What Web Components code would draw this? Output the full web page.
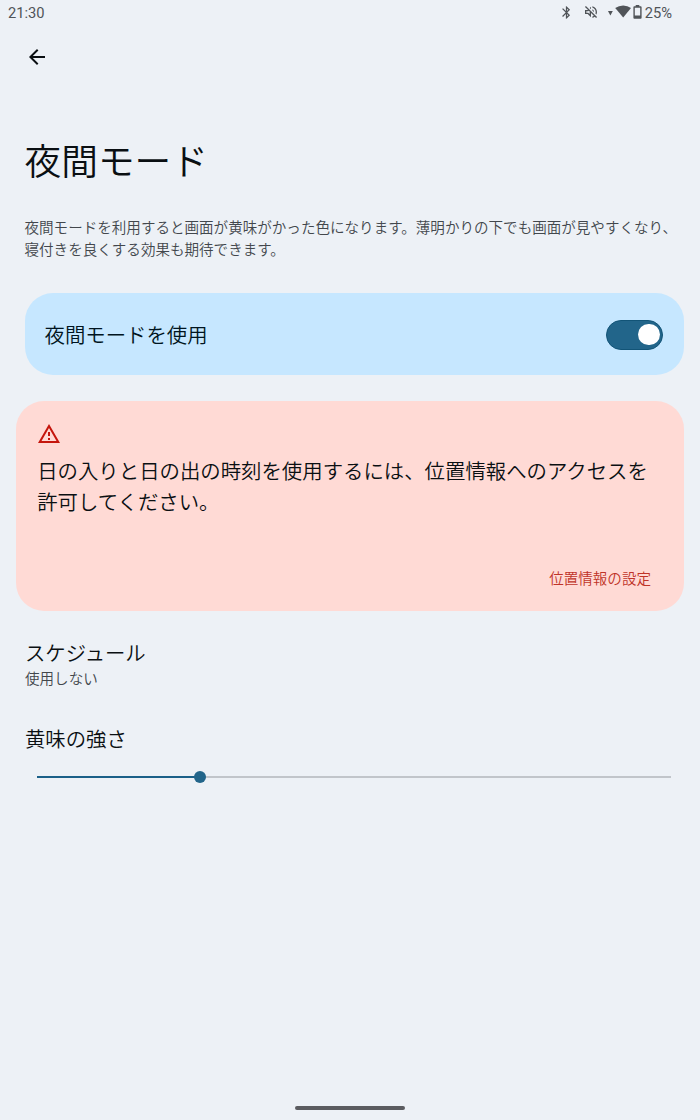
<!DOCTYPE html>
<html lang="ja">
<head>
<meta charset="utf-8">
<title>夜間モード</title>
<style>
    body {
        margin: 0;
        background: #edf1f6;
        color: #0a0f12;
        font-family: "Noto Sans CJK JP", sans-serif;
        font-weight: 350;
    }
</style>
</head>
<body>
<night-mode-screen></night-mode-screen>

<script>
class StatusBar extends HTMLElement {

    constructor() {
        super()
        this.shadowDOM = this.attachShadow({mode: "open"})
    }

    connectedCallback() {
        this.shadowDOM.innerHTML = `
            <style>
                :host {
                    display: flex;
                    align-items: center;
                    height: 26px;
                    padding: 0 28px 0 8px;
                    box-sizing: border-box;
                    font: 400 14.7px/25px Roboto, sans-serif;
                    color: #505458;
                }

                .time {
                    margin-right: auto;
                }

                svg {
                    display: block;
                    fill: #505458;
                    margin-top: -2px;
                }

                span {
                    padding-top: 1px;
                }

                .bluetooth { margin-right: 9px; }
                .muted { margin-right: 9px; }
                .wifi { margin-right: 2px; }
                .battery { margin-right: 3px; }
            </style>
            <span class="time">${this.getAttribute("time")}</span>
            <svg class="bluetooth" width="15" height="15" viewBox="0 0 24 24"><path d="M17.71 7.71 12 2h-1v7.59L6.41 5 5 6.41 10.59 12 5 17.59 6.41 19 11 14.41V22h1l5.71-5.71-4.3-4.29 4.3-4.29zM13 5.83l1.88 1.88L13 9.59V5.83zm1.88 10.46L13 18.17v-3.76l1.88 1.88z"/></svg>
            <svg class="muted" width="16" height="16" viewBox="0 0 24 24"><path d="M4.34 2.93 2.93 4.34 7.29 8.7 7 9H3v6h4l5 5v-6.59l4.18 4.18c-.65.49-1.38.88-2.18 1.11v2.06a8.94 8.94 0 0 0 3.61-1.75l2.05 2.05 1.41-1.41L4.34 2.93zM10 15.17 7.83 13H5v-2h2.83l.88-.88L10 11.41v3.76zM19 12c0 .82-.15 1.61-.41 2.34l1.53 1.53c.56-1.17.88-2.48.88-3.87 0-4.28-2.99-7.86-7-8.77v2.06c2.89.86 5 3.54 5 6.71zm-7-8-1.88 1.88L12 7.76V4zm4.5 8A4.5 4.5 0 0 0 14 7.97v1.79l2.48 2.48c.01-.08.02-.16.02-.24z"/></svg>
            <svg class="wifi" width="23" height="14" viewBox="0 0 23 14"><path d="M0 6h4.8L2.4 10.5z"/><path d="M15.2 12.6 7.2 3Q10.8.4 15.2.4T23 3z"/></svg>
            <svg class="battery" width="9" height="14" viewBox="0 0 9 14"><path fill-rule="evenodd" d="M2.7 0h3.6v1.3h1.4q.9 0 .9.9v10.6q0 .9-.9.9H1.3q-.9 0-.9-.9V2.2q0-.9.9-.9h1.4zM1.8 2.7v7.7h5.4V2.7z"/></svg>
            <span>${this.getAttribute("battery")}</span>
        `;
    }

}

class MainSwitch extends HTMLElement {

    constructor() {
        super()
        this.shadowDOM = this.attachShadow({mode: "open"})
    }

    connectedCallback() {
        this.shadowDOM.innerHTML = `
            <style>
                :host {
                    display: flex;
                    align-items: center;
                    justify-content: space-between;
                    height: 82px;
                    padding: 0 20.5px 0 20px;
                    box-sizing: border-box;
                    border-radius: 28px;
                    background: #c6e7ff;
                    font-size: 20.4px;
                    color: #001420;
                }

                .track {
                    display: flex;
                    justify-content: flex-end;
                    align-items: center;
                    width: 57.5px;
                    height: 30px;
                    margin-top: 1px;
                    padding-right: 2.5px;
                    box-sizing: border-box;
                    border-radius: 15px;
                    border: 1px solid #125477;
                    background: #22658a;
                }

                .thumb {
                    width: 21.5px;
                    height: 21.5px;
                    border-radius: 50%;
                    background: #fff;
                }
            </style>
            <slot></slot>
            <div class="track"><div class="thumb"></div></div>
        `;
    }

}

class WarningCard extends HTMLElement {

    constructor() {
        super()
        this.shadowDOM = this.attachShadow({mode: "open"})
    }

    connectedCallback() {
        this.shadowDOM.innerHTML = `
            <style>
                :host {
                    display: flex;
                    flex-direction: column;
                    height: 210.5px;
                    padding: 21.5px 32.5px 21px 20.8px;
                    box-sizing: border-box;
                    border-radius: 28px;
                    background: #ffdad5;
                }

                svg {
                    display: block;
                    fill: #c5160d;
                }

                .message {
                    margin-top: 9px;
                    font-size: 20.4px;
                    line-height: 30.5px;
                    white-space: nowrap;
                }

                .action {
                    margin-top: auto;
                    align-self: flex-end;
                    font-size: 14.55px;
                    line-height: 24px;
                    color: #c03328;
                }
            </style>
            <svg width="24" height="24" viewBox="0 0 24 24"><path d="M12 5.99 19.53 19H4.47L12 5.99M12 2 1 21h22L12 2zm1 14h-2v2h2v-2zm0-6h-2v4h2v-4z"/></svg>
            <div class="message"><slot></slot></div>
            <div class="action"><slot name="action"></slot></div>
        `;
    }

}

class PreferenceItem extends HTMLElement {

    constructor() {
        super()
        this.shadowDOM = this.attachShadow({mode: "open"})
    }

    connectedCallback() {
        this.shadowDOM.innerHTML = `
            <style>
                :host {
                    display: block;
                }

                .title {
                    font-size: 20.36px;
                    line-height: 30px;
                }

                .summary {
                    font-size: 14.55px;
                    line-height: 22px;
                    min-height: 22px;
                    color: #42474c;
                }
            </style>
            <div class="title">${this.getAttribute("label")}</div>
            <div class="summary"><slot></slot></div>
        `;
    }

}

class IntensitySlider extends HTMLElement {

    constructor() {
        super()
        this.shadowDOM = this.attachShadow({mode: "open"})
    }

    connectedCallback() {
        this.shadowDOM.innerHTML = `
            <style>
                :host {
                    display: flex;
                    align-items: center;
                    height: 12px;
                }

                .active {
                    width: ${this.getAttribute("value")}%;
                    height: 2px;
                    background: #1b6088;
                }

                .thumb {
                    flex: none;
                    width: 12.5px;
                    height: 12.5px;
                    margin: 0 -6.25px;
                    border-radius: 50%;
                    background: #22658a;
                    z-index: 1;
                }

                .rest {
                    flex: 1;
                    height: 2px;
                    background: #c1c5ca;
                }
            </style>
            <div class="active"></div>
            <div class="thumb"></div>
            <div class="rest"></div>
        `;
    }

}

class NightModeScreen extends HTMLElement {

    constructor() {
        super()
        this.shadowDOM = this.attachShadow({mode: "open"})
    }

    connectedCallback() {
        this.shadowDOM.innerHTML = `
            <style>
                :host {
                    display: flex;
                    flex-direction: column;
                    height: 1120px;
                    overflow: hidden;
                }

                .back {
                    display: block;
                    margin: 19px 0 0 25px;
                    fill: #0a0f12;
                }

                h1 {
                    margin: 63px 0 0 24.5px;
                    font-size: 36.7px;
                    line-height: 54px;
                    font-weight: inherit;
                }

                .description {
                    margin: 30px 0 0 24.5px;
                    font-size: 14.56px;
                    line-height: 22px;
                    white-space: nowrap;
                    color: #42474c;
                }

                main-switch {
                    margin: 33px 16.5px 0 24.5px;
                }

                warning-card {
                    margin: 25.5px 16.5px 0 16.4px;
                }

                .schedule {
                    margin: 26px 0 0 25px;
                }

                .intensity {
                    margin: 33.5px 0 0 25px;
                }

                intensity-slider {
                    margin: -3.5px 29px 0 37px;
                }

                .handle {
                    width: 110px;
                    height: 4px;
                    margin: auto auto 10px;
                    border-radius: 2px;
                    background: #5b5c60;
                }
            </style>

            <status-bar time="21:30" battery="25%"></status-bar>
            <svg class="back" width="24" height="24" viewBox="0 0 24 24"><path d="M20 11H7.83l5.59-5.59L12 4l-8 8 8 8 1.41-1.41L7.83 13H20v-2z"/></svg>
            <h1>夜間モード</h1>
            <div class="description">夜間モードを利用すると画面が黄味がかった色になります。薄明かりの下でも画面が見やすくなり、<br>寝付きを良くする効果も期待できます。</div>
            <main-switch>夜間モードを使用</main-switch>
            <warning-card>
                日の入りと日の出の時刻を使用するには、位置情報へのアクセスを<br>許可してください。
                <span slot="action">位置情報の設定</span>
            </warning-card>
            <preference-item class="schedule" label="スケジュール">使用しない</preference-item>
            <preference-item class="intensity" label="黄味の強さ"></preference-item>
            <intensity-slider value="25.7"></intensity-slider>
            <div class="handle"></div>
        `;
    }

}

customElements.define('status-bar', StatusBar);
customElements.define('main-switch', MainSwitch);
customElements.define('warning-card', WarningCard);
customElements.define('preference-item', PreferenceItem);
customElements.define('intensity-slider', IntensitySlider);
customElements.define('night-mode-screen', NightModeScreen);
</script>
</body>
</html>
